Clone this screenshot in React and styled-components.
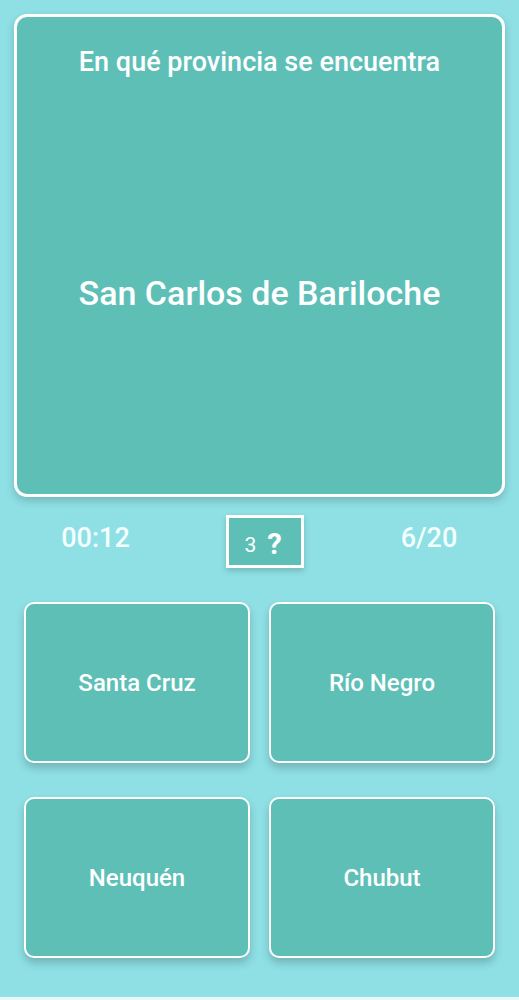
import React from "react";
import styled, { createGlobalStyle } from "styled-components";

const Global = createGlobalStyle`
  html, body { margin: 0; padding: 0; background: #eef5f5; }
  * { box-sizing: border-box; }
  body { font-family: Roboto, "Noto Sans", "Liberation Sans", sans-serif; }
`;

const Screen = styled.div`
  height: 997px;
  background: #8ee0e5;
  padding: 14px 14px 0 14px;
  display: flex;
  flex-direction: column;
`;

const QuestionCard = styled.div`
  height: 483px;
  flex-shrink: 0;
  background: #5ebfb7;
  border: 3px solid #ffffff;
  border-radius: 13px;
  box-shadow: 0 4px 8px rgba(0, 0, 0, 0.18);
  display: flex;
  flex-direction: column;
  align-items: center;
  color: #ffffff;
`;

const Prompt = styled.div`
  margin-top: 29px;
  font-size: 27px;
  font-weight: 500;
  line-height: 32px;
`;

const Place = styled.div`
  margin-top: 195px;
  font-size: 34px;
  font-weight: 500;
  line-height: 40px;
`;

const StatsRow = styled.div`
  height: 105px;
  flex-shrink: 0;
  display: grid;
  grid-template-columns: 212px 78px 1fr;
  align-items: start;
  padding-top: 18px;
  color: #f4ffff;
`;

const Stat = styled.div`
  font-size: 27px;
  font-weight: 500;
  line-height: 46px;
  text-align: center;
  padding-left: ${(p) => p.$padL || 0}px;
  padding-right: ${(p) => p.$padR || 0}px;
`;

const HintBox = styled.div`
  height: 53px;
  width: 78px;
  background: #5ebfb7;
  border: 3px solid #ffffff;
  box-shadow: 0 3px 6px rgba(0, 0, 0, 0.18);
  display: flex;
  align-items: center;
  justify-content: center;
  gap: 11px;
  color: #ffffff;
  padding-top: 4px;
  padding-right: 4px;
`;

const HintCount = styled.span`
  font-size: 21px;
  font-weight: 400;
  line-height: 24px;
  padding-top: 2px;
`;

const HintMark = styled.span`
  font-size: 29px;
  font-weight: 700;
  line-height: 30px;
`;

const Answers = styled.div`
  display: grid;
  grid-template-columns: 226px 226px;
  grid-auto-rows: 161px;
  column-gap: 19px;
  row-gap: 34px;
  padding-left: 10px;
`;

const AnswerButton = styled.button`
  background: #5ebfb7;
  border: 2.5px solid #ffffff;
  border-radius: 10px;
  box-shadow: 0 5px 8px rgba(0, 0, 0, 0.2);
  color: #ffffff;
  font-family: inherit;
  font-size: 24px;
  font-weight: 500;
  display: flex;
  align-items: center;
  justify-content: center;
  padding: 0;
`;

const answers = ["Santa Cruz", "Río Negro", "Neuquén", "Chubut"];

export default function App() {
  return (
    <>
      <Global />
      <Screen>
        <QuestionCard>
          <Prompt>En qué provincia se encuentra</Prompt>
          <Place>San Carlos de Bariloche</Place>
        </QuestionCard>
        <StatsRow>
          <Stat $padR={49}>00:12</Stat>
          <HintBox>
            <HintCount>3</HintCount>
            <HintMark>?</HintMark>
          </HintBox>
          <Stat $padL={49}>6/20</Stat>
        </StatsRow>
        <Answers>
          {answers.map((a) => (
            <AnswerButton key={a}>{a}</AnswerButton>
          ))}
        </Answers>
      </Screen>
    </>
  );
}
